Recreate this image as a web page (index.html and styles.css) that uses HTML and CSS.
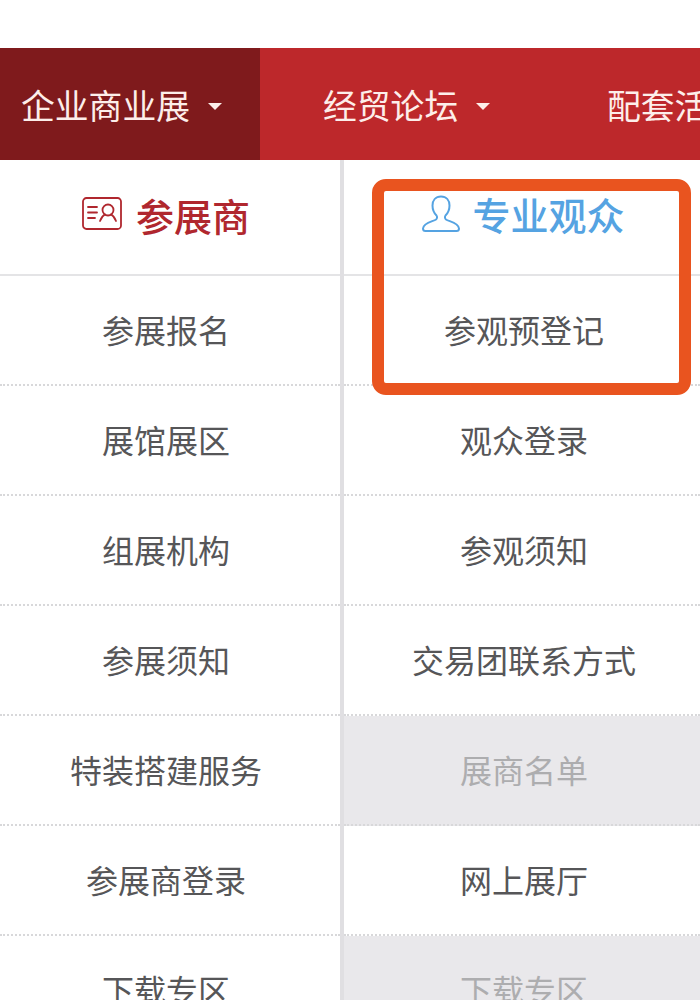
FILE: index.html
```html
<!DOCTYPE html>
<html lang="zh-CN">
<head>
<meta charset="utf-8">
<title>企业商业展</title>
<link rel="stylesheet" href="styles.css">
</head>
<body>
<div class="page">
  <nav class="nav">
    <a class="tab tab-active">企业商业展<i class="caret"></i></a>
    <a class="tab tab-second">经贸论坛<i class="caret"></i></a>
    <a class="tab tab-third">配套活动</a>
  </nav>
  <main class="board">
    <section class="col col-left">
      <header class="head head-red">
        <svg class="icon-card" viewBox="0 0 40 34" fill="none" stroke="currentColor" stroke-width="1.800" stroke-linecap="round" stroke-linejoin="round">
          <rect x="1" y="1" width="38" height="31" rx="3.500"/>
          <path d="M6 10h9M6 15.500h9M6 21h7"/>
          <circle cx="26" cy="13" r="5.500"/>
          <path d="M18 24c1.500-4 4-6 5-6.500M34 24c-1.500-4-4-6-5-6.500"/>
        </svg>
        <span>参展商</span>
      </header>
      <a class="row">参展报名</a>
      <a class="row">展馆展区</a>
      <a class="row">组展机构</a>
      <a class="row">参展须知</a>
      <a class="row">特装搭建服务</a>
      <a class="row">参展商登录</a>
      <a class="row">下载专区</a>
    </section>
    <section class="col col-right">
      <header class="head head-blue">
        <svg class="icon-user" viewBox="0 0 38 38" fill="none" stroke="currentColor" stroke-width="2" stroke-linecap="round" stroke-linejoin="round">
          <path d="M19 1.500c-5.500 0-8.500 4-8.500 9 0 4 1.500 7.500 4 10 .8 1 .8 3-.5 4-3 2-12.500 3-13 9 0 1.500 1 2.500 2.500 2.500h31c1.500 0 2.500-1 2.500-2.500-.5-6-10-7-13-9-1.300-1-1.300-3-.5-4 2.500-2.500 4-6 4-10 0-5-3-9-8.500-9z"/>
        </svg>
        <span>专业观众</span>
      </header>
      <a class="row">参观预登记</a>
      <a class="row">观众登录</a>
      <a class="row">参观须知</a>
      <a class="row">交易团联系方式</a>
      <a class="row row-off">展商名单</a>
      <a class="row">网上展厅</a>
      <a class="row row-off">下载专区</a>
    </section>
    <div class="highlight"></div>
  </main>
</div>
</body>
</html>
```
FILE: styles.css
```css
* { box-sizing: border-box; }
html, body { margin: 0; height: 100%; }
body {
  background: #fff;
  overflow: hidden;
  font-family: "Noto Sans CJK SC", "Noto Sans", sans-serif;
}
.page { padding-top: 48px; width: 700px; height: 1000px; overflow: hidden; }
.nav {
  display: flex;
  height: 112px;
  background: #bd282b;
  color: #fdeeea;
  font-size: 33.8px;
  white-space: nowrap;
  overflow: hidden;
}
.tab { display: flex; align-items: center; height: 100%; flex: none; }
.tab-active { width: 260px; padding-left: 21px; background: #7f1a1c; }
.tab-second { width: 347px; padding-left: 63px; }
.caret {
  width: 0; height: 0;
  margin-left: 18px;
  margin-top: 5px;
  border-left: 7.5px solid transparent;
  border-right: 7.5px solid transparent;
  border-top: 7.5px solid #fdeeea;
}
.board { position: relative; display: flex; height: 840px; background: #fff; }
.col { display: flex; flex-direction: column; flex: none; }
.col-left { width: 344px; border-right: 4px solid #e0dfe2; }
.col-right { width: 356px; }
.head {
  display: flex;
  align-items: center;
  justify-content: center;
  flex: none;
  height: 116px;
  border-bottom: 2px solid #e4e4e6;
  font-size: 38px;
  font-weight: 500;
  padding-bottom: 5px;
}
.col-left .head { padding-right: 8px; }
.col-right .head { padding-left: 4px; padding-bottom: 7px; }
.head-red { color: #b0272e; }
.head-blue { color: #55a3e2; }
.icon-card { width: 40px; height: 34px; margin-right: 14px; margin-top: -2px; }
.icon-user { width: 38px; height: 38px; margin-right: 12px; margin-left: -1px; }
.row {
  display: flex;
  align-items: center;
  justify-content: center;
  flex: none;
  height: 110px;
  font-size: 32px;
  color: #565658;
  border-bottom: 2px dotted #d8d8da;
  white-space: nowrap;
  padding-bottom: 2px;
}
.col-left .row { padding-right: 8px; }
.col-right .row { padding-left: 4px; }
.row-off { background: #e9e8eb; color: #adadaf; }
.highlight {
  position: absolute;
  left: 372px;
  top: 19px;
  width: 319px;
  height: 216px;
  border: 12px solid #e9541f;
  border-radius: 14px;
}
```
